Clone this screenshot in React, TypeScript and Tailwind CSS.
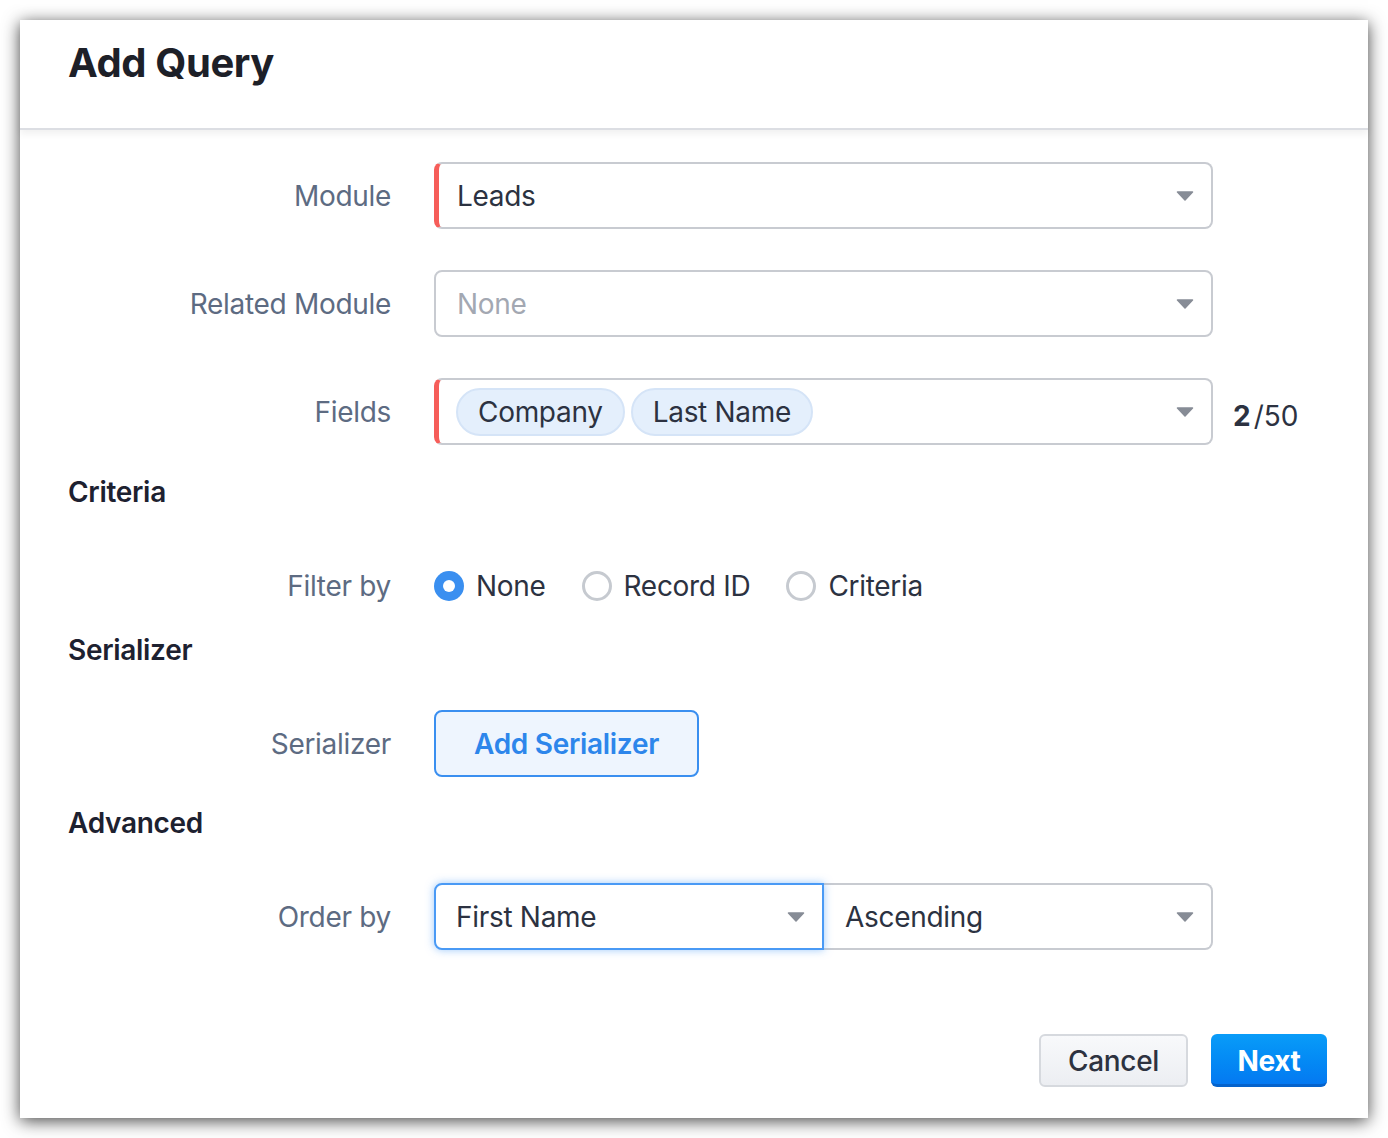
import React from "react";

const Caret = () => (
  <svg width="18" height="10" viewBox="0 0 18 10" className="shrink-0">
    <path d="M1.5 1 H16.5 L9 9 Z" fill="#878c96" stroke="#878c96" strokeWidth="1.5" strokeLinejoin="round" />
  </svg>
);

const Label = ({ children }: { children: React.ReactNode }) => (
  <div className="w-[323px] shrink-0 text-right text-[28px] leading-[36px] tracking-[-0.3px] text-[#5d6b82]">{children}</div>
);

const Heading = ({ children }: { children: React.ReactNode }) => (
  <div className="text-[28px] leading-[36px] tracking-[-0.3px] font-semibold text-[#1d2130]">{children}</div>
);

const Radio = ({ checked, label }: { checked?: boolean; label: string }) => (
  <div className="flex items-center">
    {checked ? (
      <div className="w-[30px] h-[30px] rounded-full bg-[#3a8ff0] flex items-center justify-center">
        <div className="w-[12px] h-[12px] rounded-full bg-white" />
      </div>
    ) : (
      <div className="w-[30px] h-[30px] rounded-full border-[3px] border-[#c6cad0] bg-white" />
    )}
    <span className="ml-[12px] text-[28px] leading-[36px] tracking-[-0.3px] text-[#2c3241]">{label}</span>
  </div>
);

export default function App() {
  return (
    <div className="w-[1388px] h-[1138px] bg-white p-[20px]" style={{ fontFamily: "Inter, 'Open Sans', sans-serif" }}>
      <div className="w-[1348px] h-[1098px] bg-white flex flex-col shadow-[0_3px_16px_rgba(0,0,0,0.72)]">
        {/* Header */}
        <div className="h-[110px] shrink-0 pl-[48px] pt-[19px] border-b-2 border-[#dcdee3] shadow-[0_4px_7px_rgba(0,0,0,0.06)] relative z-10">
          <div className="text-[40px] leading-[48px] font-bold tracking-[-0.4px] text-[#1d2028]">Add Query</div>
        </div>

        {/* Body */}
        <div className="flex flex-col pl-[48px] flex-1">
          {/* Module */}
          <div className="flex items-center h-[67px] mt-[32px]">
            <Label>Module</Label>
            <div className="ml-[43px] w-[779px] h-[67px] rounded-[8px] border-2 border-[#c8cbd1] border-l-[5px] border-l-[#f65d59] flex items-center pl-[18px] pr-[17px]">
              <span className="flex-1 text-[28px] leading-[36px] tracking-[-0.3px] text-[#2c3241]">Leads</span>
              <Caret />
            </div>
          </div>

          {/* Related Module */}
          <div className="flex items-center h-[67px] mt-[41px]">
            <Label>Related Module</Label>
            <div className="ml-[43px] w-[779px] h-[67px] rounded-[8px] border-2 border-[#c8cbd1] flex items-center pl-[21px] pr-[17px]">
              <span className="flex-1 text-[28px] leading-[36px] tracking-[-0.3px] text-[#a3a8b2]">None</span>
              <Caret />
            </div>
          </div>

          {/* Fields */}
          <div className="flex items-center h-[67px] mt-[41px]">
            <Label>Fields</Label>
            <div className="ml-[43px] w-[779px] h-[67px] rounded-[8px] border-2 border-[#c8cbd1] border-l-[5px] border-l-[#f65d59] flex items-center pl-[17px] pr-[17px]">
              <div className="flex-1 flex items-center gap-[6px]">
                <span className="h-[48px] px-[20px] rounded-full bg-[#e4effc] border-2 border-[#d5e4f7] flex items-center text-[28px] leading-[36px] tracking-[-0.3px] text-[#2c3241]">Company</span>
                <span className="h-[48px] px-[20px] rounded-full bg-[#e4effc] border-2 border-[#d5e4f7] flex items-center text-[28px] leading-[36px] tracking-[-0.3px] text-[#2c3241]">Last Name</span>
              </div>
              <Caret />
            </div>
            <div className="ml-[20px] text-[28px] leading-[36px] text-[#2c3241] mt-[9px]">
              <span className="font-bold">2</span>
              <span className="ml-[3px]">/50</span>
            </div>
          </div>

          {/* Criteria */}
          <div className="mt-[29px]">
            <Heading>Criteria</Heading>
          </div>
          <div className="flex items-center h-[67px] mt-[42px]">
            <Label>Filter by</Label>
            <div className="ml-[43px] flex items-center gap-[36px]">
              <Radio checked label="None" />
              <Radio label="Record ID" />
              <Radio label="Criteria" />
            </div>
          </div>

          {/* Serializer */}
          <div className="mt-[13px]">
            <Heading>Serializer</Heading>
          </div>
          <div className="flex items-center h-[67px] mt-[42px]">
            <Label>Serializer</Label>
            <button className="ml-[43px] w-[265px] h-[67px] rounded-[8px] border-2 border-[#3a8ff0] bg-[#eef5fe] text-[28px] leading-[36px] tracking-[-0.3px] font-semibold text-[#2d86eb]">
              Add Serializer
            </button>
          </div>

          {/* Advanced */}
          <div className="mt-[28px]">
            <Heading>Advanced</Heading>
          </div>
          <div className="flex items-center h-[67px] mt-[42px]">
            <Label>Order by</Label>
            <div className="ml-[43px] flex">
              <div className="w-[390px] h-[67px] rounded-l-[8px] border-2 border-[#4a9af5] shadow-[0_0_8px_rgba(74,154,245,0.55)] flex items-center pl-[20px] pr-[17px] relative z-10 bg-white">
                <span className="flex-1 text-[28px] leading-[36px] tracking-[-0.3px] text-[#2c3241]">First Name</span>
                <Caret />
              </div>
              <div className="w-[389px] h-[67px] rounded-r-[8px] border-2 border-l-0 border-[#c8cbd1] flex items-center pl-[21px] pr-[17px]">
                <span className="flex-1 text-[28px] leading-[36px] tracking-[-0.3px] text-[#2c3241]">Ascending</span>
                <Caret />
              </div>
            </div>
          </div>

          {/* Footer */}
          <div className="mt-auto flex justify-end items-center gap-[23px] pr-[41px] pb-[31px]">
            <button className="w-[149px] h-[53px] rounded-[6px] border-2 border-[#d6d9de] bg-gradient-to-b from-[#f8f9fb] to-[#eceef2] text-[28px] leading-[36px] tracking-[-0.3px] font-medium text-[#2d3240]">
              Cancel
            </button>
            <button className="w-[116px] h-[53px] pt-[3px] rounded-[6px] border-b-[3px] border-[#0563cc] bg-gradient-to-b from-[#0a9cf8] to-[#0579f1] text-[28px] leading-[36px] tracking-[-0.3px] font-bold text-white">
              Next
            </button>
          </div>
        </div>
      </div>
    </div>
  );
}
